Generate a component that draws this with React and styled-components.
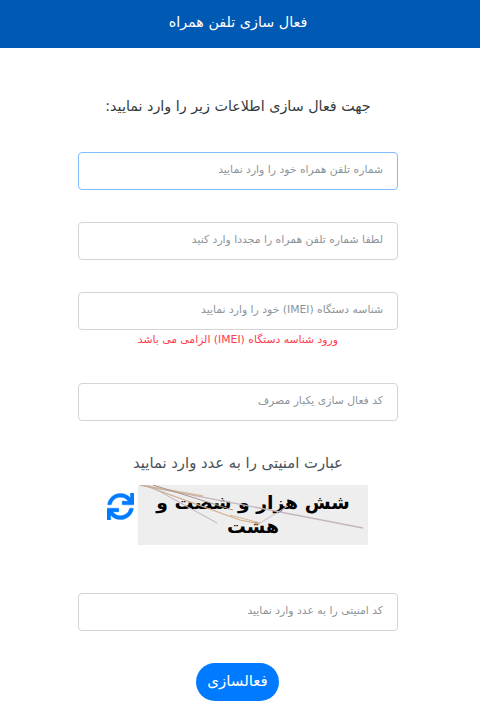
import React from 'react';
import styled, { createGlobalStyle } from 'styled-components';
import { FaSync } from 'react-icons/fa';

const Global = createGlobalStyle`
html, body { margin:0; padding:0; background:#fff; }
body { font-family:"DejaVu Sans","Noto Sans",sans-serif; color:#212529; }
* { box-sizing:border-box; }
`;

const App = () => {
  return (
    <Page dir="rtl">
      <Global />
      <Header><HeaderTitle>فعال سازی تلفن همراه</HeaderTitle></Header>
      <Form>
        <Intro>جهت فعال سازی اطلاعات زیر را وارد نمایید:</Intro>
        <Field $gap={32}><Input $focused placeholder="شماره تلفن همراه خود را وارد نمایید" /></Field>
        <Field $gap={32}><Input placeholder="لطفا شماره تلفن همراه را مجددا وارد کنید" /></Field>
        <Field $gap={0}><Input placeholder="شناسه دستگاه (IMEI) خود را وارد نمایید" /></Field>
        <ErrorText>ورود شناسه دستگاه (IMEI) الزامی می باشد</ErrorText>
        <Field $gap={30}><Input placeholder="کد فعال سازی یکبار مصرف" /></Field>
        <CaptchaLabel>عبارت امنیتی را به عدد وارد نمایید</CaptchaLabel>
        <CaptchaRow>
          <CaptchaBox>
            <CaptchaText>شش هزار و شصت و هشت</CaptchaText>
            <Noise viewBox="0 0 230 60">
              <path d="M2 0 L225 43" stroke="#c4b4c0" strokeWidth="1.4" fill="none" />
              <path d="M2 0 L65 11" stroke="#d2b48e" strokeWidth="1.6" fill="none" opacity=".9" />
              <path d="M5 0 L102 35 L122 39" stroke="#d0ae8c" strokeWidth="1.2" fill="none" />
              <path d="M10 0 L79 38" stroke="#bcb0bc" strokeWidth="1" fill="none" />
              <path d="M15 0 L95 25" stroke="#a8948c" strokeWidth="1" fill="none" />
              <path d="M122 38 L150 21" stroke="#c8bcc8" strokeWidth="1" fill="none" />
              <path d="M92 30 L122 38" stroke="#d8b494" strokeWidth="1" fill="none" />
            </Noise>
          </CaptchaBox>
          <RefreshIcon><FaSync /></RefreshIcon>
        </CaptchaRow>
        <Field $gap={32}><Input placeholder="کد امنیتی را به عدد وارد نمایید" /></Field>
        <SubmitButton type="button">فعالسازی</SubmitButton>
      </Form>
    </Page>
  );
};

export default App;

const Page = styled.div`
width:100%;
min-height:721px;
`

const Header = styled.header`
height:48px;
padding:0 4px 5px 0;
background:#0059b3;
color:#fff;
display:flex;
align-items:center;
justify-content:center;
`

const HeaderTitle = styled.h1`
margin:0;
font-size:14.3px;
font-weight:normal;
`

const Form = styled.form`
width:320px;
margin-right:82px;
display:flex;
flex-direction:column;
`

const Intro = styled.p`
margin:48px 0 36px;
height:20px;
line-height:20px;
text-align:center;
font-size:14.3px;
color:#343a40;
`

const Field = styled.div`
margin-bottom:${props => props.$gap}px;
`

const Input = styled.input`
display:block;
width:100%;
height:38px;
padding:0 14px 3px;
direction:rtl;
font-family:inherit;
font-size:10.8px;
color:#495057;
background:#fff;
border:1px solid ${props => props.$focused ? '#80bdff' : '#d5d5d5'};
border-radius:4px;
outline:none;
&::placeholder { color:#8d949a; opacity:1; }
`

const ErrorText = styled.div`
height:23px;
padding-top:2px;
margin-bottom:30px;
padding-right:60px;
line-height:16px;
font-size:10.8px;
color:#ff3b4e;
`

const CaptchaLabel = styled.div`
height:22px;
line-height:22px;
margin-top:1px;
margin-bottom:1px;
text-align:center;
font-size:14.8px;
color:#495057;
`

const CaptchaRow = styled.div`
display:flex;
align-items:flex-start;
justify-content:flex-start;
margin:10px 0 48px;
padding-right:30px;
`

const CaptchaBox = styled.div`
position:relative;
width:230px;
height:60px;
background:#eeeeee;
flex:none;
overflow:hidden;
display:flex;
align-items:center;
justify-content:center;
`

const CaptchaText = styled.div`
width:210px;
text-align:center;
font-size:18.8px;
line-height:24px;
font-weight:bold;
color:#000;
`

const Noise = styled.svg`
position:absolute;
inset:0;
width:100%;
height:100%;
`

const RefreshIcon = styled.span`
display:flex;
flex:none;
margin:8px 4px 0 0;
color:#007bff;
font-size:27px;
& path { stroke:currentColor; stroke-width:8px; }
`

const SubmitButton = styled.button`
align-self:center;
width:83px;
height:38px;
margin-right:1px;
border:none;
border-radius:19px;
background:#007bff;
color:#fff;
font-family:inherit;
font-size:15px;
padding:0 0 3px;
`
